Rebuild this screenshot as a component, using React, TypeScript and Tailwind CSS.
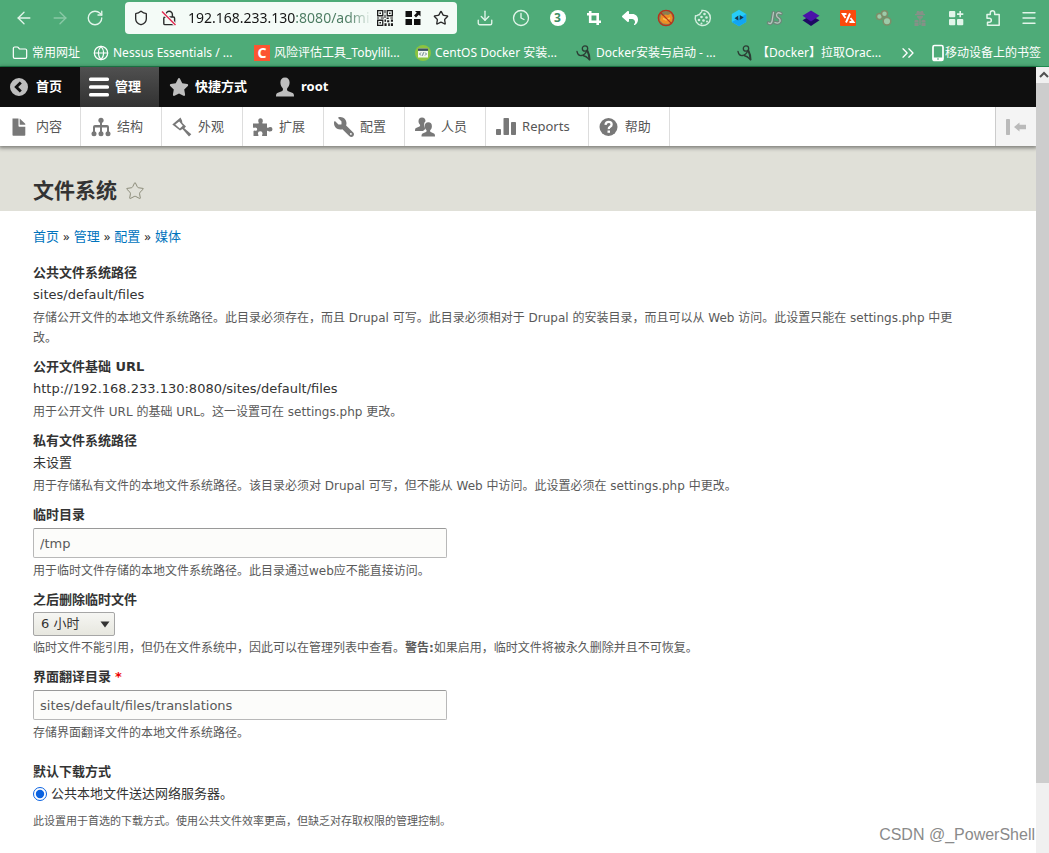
import type { ReactNode } from "react";
import {
  ArrowLeft,
  ArrowRight,
  ChevronsRight,
  Clock,
  Download,
  Globe,
  Menu,
  Folder,
  RotateCw,
  Shield,
  Star,
} from "lucide-react";
import { FaStar, FaWrench, FaReply } from "react-icons/fa6";

/* ---------- browser icons ---------- */

function InsecureLock() {
  return (
    <svg viewBox="0 0 16 16" className="size-4" fill="none" stroke="#2b2b2b" strokeWidth="1.4">
      <path d="M5 7V4.5a3.2 3.2 0 0 1 6.4 0V7" />
      <rect x="2.8" y="7" width="10.8" height="7.6" rx="1.2" />
      <path d="M1 1.5 14.5 15" stroke="#f4f9f6" strokeWidth="3.4" />
      <path d="M1 1.5 14.5 15" stroke="#e22850" strokeWidth="1.4" />
    </svg>
  );
}

function QrIcon() {
  return (
    <svg viewBox="0 0 15 15" className="size-4" fill="#1c1c1c">
      <path fillRule="evenodd" d="M0 0h6v6H0zM1.2 1.2v3.6h3.6V1.2zM9 0h6v6H9zM10.2 1.2v3.6h3.6V1.2zM0 9h6v6H0zM1.2 10.2v3.6h3.6v-3.6z" />
      <path d="M2.3 2.3h1.4v1.4H2.3zM11.3 2.3h1.4v1.4h-1.4zM2.3 11.3h1.4v1.4H2.3zM7 0h1v3H7zM7 4.5h1v3H7zM0 7h2v1H0zM3.5 7h3v1h-3zM9 7h2v1.5H9zM12.5 7H15v1h-2.5zM7 9h1.5v2H7zM9.5 9.5h2v2h-2zM13 9h2v2h-2zM7 12.5h2V15H7zM10.5 12.5h1.5V15h-1.5zM13 12.5h2V15h-2z" />
    </svg>
  );
}

function TilesIcon() {
  return (
    <svg viewBox="0 0 16 16" className="size-4" fill="#111">
      <rect x="0.5" y="1" width="6.5" height="6" />
      <rect x="0.5" y="9" width="6.5" height="6" />
      <rect x="9" y="9" width="6.5" height="6" />
      <path d="M10 1h5.5v5.5l-1.7-1.7L11 7.5 9 5.6l2.8-2.8z" />
    </svg>
  );
}

function CropIcon() {
  return (
    <svg viewBox="0 0 20 20" className="size-5" fill="none" stroke="#fff" strokeWidth="2.6">
      <path d="M6.2 3v10.7H17M3 6.3h10.700V17" />
    </svg>
  );
}

function BlockedIcon() {
  return (
    <svg viewBox="0 0 20 20" className="size-5">
      <circle cx="10" cy="10" r="8" fill="#8a7f52" />
      <path d="M5 6.500 7 8l2-1.500 3 .5 3-1.500 1.500 4-1 5-3.500 1.500-5-.5-3-3z" fill="#ee8f25" />
      <path d="m7 10.500 3 1.500 4-2" fill="none" stroke="#f9c24c" strokeWidth="1.400" />
      <circle cx="10" cy="10" r="7.700" fill="none" stroke="#b8321c" strokeWidth="1.300" />
      <path d="M4.6 4.6 15.4 15.4" stroke="#b8321c" strokeWidth="1.3" />
    </svg>
  );
}

function CookieIcon() {
  return (
    <svg viewBox="0 0 20 20" className="size-5" fill="none" stroke="#d3eedf" strokeWidth="1.400" strokeLinecap="round">
      <path d="M9 2.400q.2 2-1.500 2.600-.5 2-2.500 2-1 1-2.500.8A7.600 7.600 0 1 0 9 2.400z" />
      <g fill="#d3eedf" stroke="none">
        <circle cx="11.500" cy="6" r="1.300" />
        <circle cx="8.500" cy="9" r="1.300" />
        <circle cx="13.500" cy="9.500" r="1.300" />
        <circle cx="6" cy="12" r="1.300" />
        <circle cx="10.500" cy="12.500" r="1.300" />
        <circle cx="14" cy="13.500" r="1" />
        <circle cx="8.500" cy="15.500" r="1" />
      </g>
    </svg>
  );
}

function HexIcon() {
  return (
    <svg viewBox="0 0 20 20" className="size-5">
      <path d="M10 1.8 17.2 6v8L10 18.2 2.8 14V6z" fill="#27cdf8" />
      <path d="M17.2 6v8L10 18.2 2.8 14z" fill="#12a5f2" />
      <path d="M9.300 7.500v5L5.500 10.300zM10.700 7v5l4-2.500z" fill="#173a4d" />
    </svg>
  );
}

function JsIcon() {
  return (
    <svg viewBox="0 0 20 20" className="size-5" fill="none" strokeLinecap="round">
      <g stroke="#6c8578" strokeWidth="3.6">
        <path d="M8.500 4.500 7 13.500q-1 3-3.500 1.500" />
        <path d="M16 5.500q-4-2-4.500 1.500 0 2 2 3t1.500 3.500q-1.500 2.500-5 1" />
      </g>
      <g stroke="#b5c9be" strokeWidth="1.3">
        <path d="M8.500 4.500 7 13.500q-1 3-3.500 1.500" />
        <path d="M16 5.500q-4-2-4.500 1.500 0 2 2 3t1.500 3.500q-1.500 2.500-5 1" />
      </g>
    </svg>
  );
}

function LayersIcon() {
  return (
    <svg viewBox="0 0 20 20" className="size-5">
      <path d="m10 7.500 8.500 4.800L10 18l-8.500-5.700z" fill="#1d0a63" />
      <path d="m10 2.500 8.500 5.300L10 13.500 1.500 7.800z" fill="#4a12a8" />
    </svg>
  );
}

function OrangeCodeIcon() {
  return (
    <svg viewBox="0 0 20 20" className="size-5">
      <rect x="2" y="2" width="16" height="16" rx="1" fill="#fb4a0c" />
      <path d="M8.500 6H4.800L7.500 10M12 5.500 8 14.500M11.500 14h4L12.500 10" fill="none" stroke="#fff" strokeWidth="1.900" />
    </svg>
  );
}

function MoleculeIcon() {
  return (
    <svg viewBox="0 0 20 20" className="size-5" fill="#9ccba9" stroke="#7d8d68" strokeWidth="1.500">
      <circle cx="5.500" cy="8.500" r="3" />
      <circle cx="10.500" cy="5.800" r="3" />
      <circle cx="13" cy="13.300" r="3.800" />
    </svg>
  );
}

function AgentIcon() {
  return (
    <svg viewBox="0 0 20 20" className="size-5" fill="#859187">
      <path d="M7 3h2l1 1 1-1h2l.8 3H15v1.3H5V6h1.2z" />
      <path d="M7 8h6q0 3-3 3T7 8zM4.500 12.500q2-1.500 4 0v1.500h-4zM11.500 12.500q2-1.500 4 0v1.500h-4zM4.500 14.500h4V18h-4zM11.500 14.500h4V18h-4zM9.300 11h1.400v6H9.300z" />
    </svg>
  );
}

function AppsPlusIcon() {
  return (
    <svg viewBox="0 0 20 20" className="size-5" fill="#e2f5ea">
      <rect x="3" y="3" width="6.300" height="6.300" rx="1" />
      <rect x="3" y="11" width="6.300" height="6.300" rx="1" />
      <rect x="11" y="11" width="6.300" height="6.300" rx="1" />
      <path d="M13.400 3h1.600v2.300h2.300v1.600H15v2.400h-1.600V6.900H11V5.300h2.400z" />
    </svg>
  );
}

function AddonIcon() {
  return (
    <svg viewBox="0 0 20 20" className="size-5" fill="none" stroke="#e2f5ea" strokeWidth="1.500" strokeLinejoin="round">
      <path d="M7.300 6.500V5a2.200 2.200 0 0 1 4.400 0v1.500h4.500v10.700H4.500v-3h1.800a2 2 0 0 0 0-4H4V6.500z" />
    </svg>
  );
}

function PhoneIcon() {
  return (
    <svg viewBox="0 0 14 18" className="h-[18px] w-[14px]">
      <rect x="2" y="1.500" width="10" height="15" rx="1.500" fill="none" stroke="#fff" strokeWidth="1.700" />
      <path d="M2 13.500h10v3H2z" fill="#fff" />
      <path d="M6 15h2" stroke="#4eab78" />
    </svg>
  );
}

function CentosIcon() {
  return (
    <svg viewBox="0 0 16 16" className="size-4">
      <circle cx="8" cy="8" r="8" fill="#8cc43f" />
      <rect x="3" y="3.500" width="10" height="9" fill="#f4f8ee" />
      <rect x="3" y="3.500" width="10" height="2.400" fill="#3b5261" />
      <path d="m6 7.500-1.500 1.500L6 10.500M10 7.500 11.500 9 10 10.500M8.500 7.300l-1 3.400" fill="none" stroke="#41606f" strokeWidth="0.800" />
    </svg>
  );
}

function FigureIcon() {
  return (
    <svg viewBox="0 0 16 16" className="size-4 shrink-0" fill="none" stroke="#2c3d34" strokeWidth="1.300" strokeLinecap="round">
      <circle cx="9" cy="3.500" r="2.700" />
      <path d="M1 6.500q1 4.500 4.500 4t5.500-5" />
      <path d="M7 10.500q3 .5 6.500 4" />
      <path d="M11.500 6q2 4 2 8.500" strokeWidth="2" />
    </svg>
  );
}

function CsdnIcon() {
  return (
    <span className="flex size-4 items-center justify-center bg-[#fc5531] text-sm font-bold text-white">C</span>
  );
}

/* ---------- admin toolbar icons ---------- */

function Glyph({ children }: { children: ReactNode }) {
  return (
    <svg viewBox="0 0 20 20" className="size-5 shrink-0" fill="currentColor">
      {children}
    </svg>
  );
}

const HomeGlyph = () => (
  <Glyph>
    <path fillRule="evenodd" d="M9 1a9 9 0 1 0 0 18A9 9 0 0 0 9 1zm2.800 12.600-2 2L4.200 10l5.600-5.600 2 2L8.200 10z" />
  </Glyph>
);
const MenuGlyph = () => (
  <Glyph>
    <rect y="0.500" width="20" height="3.500" rx="1.500" />
    <rect y="8.200" width="20" height="3.500" rx="1.500" />
    <rect y="16" width="20" height="3.500" rx="1.500" />
  </Glyph>
);
const UserGlyph = () => (
  <Glyph>
    <path d="M10 0.500c3 0 4.600 2 4.600 5 0 2.500-1 4.500-2.200 5.600-.6.600-.5 2.400.3 2.900l5 2c1 .4 1.300 1.500 1.300 3.500H1c0-2 .3-3.100 1.300-3.500l5-2c.8-.5.9-2.300.3-2.900C6.400 10 5.400 8 5.400 5.500c0-3 1.600-5 4.600-5z" />
  </Glyph>
);
const FileGlyph = () => (
  <Glyph>
    <path d="M2.500 1.500h6V9q0 .8.800.8h6V18q0 .8-.8.800H3.300q-.8 0-.8-.8z" />
    <path d="M9.700 1.500v6.300H15q.8-.2.200-1z" />
  </Glyph>
);
const StructureGlyph = () => (
  <Glyph>
    <circle cx="10" cy="3.300" r="2.600" />
    <path d="M9 5h2v12H9zM2 10q0-2 2-2h12q2 0 2 2v6h-2v-5.500H4V16H2z" />
    <circle cx="3" cy="16.700" r="2.500" />
    <circle cx="10" cy="16.700" r="2.500" />
    <circle cx="17" cy="16.700" r="2.500" />
  </Glyph>
);
const BrushGlyph = () => (
  <Glyph>
    <path fillRule="evenodd" d="M8.500 0.500 10 3.500l.4 2.500 3.600 3.500-1.700 1.700 7 6-2.300 2.300-6.500-7.500-2.500 1.500L.3 7.500zM3.300 7.600l4.500 3.900 3-2.700L7.200 4.600z" />
  </Glyph>
);
const ExtendGlyph = () => (
  <Glyph>
    <path d="M0 6.500h5.500q.6-.7-.2-2Q5 1.200 7.500 1.200T9.800 4.500q-.8 1.300-.2 2H14v4q.7.600 2-.3 3.500-.7 3.500 2t-3.500 2.200q-1.300-1-2-.3V19H9.300q-.6-.7.200-2 .3-2.800-2.300-2.800T5 17q.8 1.300.2 2H.500v-5q.7-.7 1.700-.2 2 .2 2-1.500T2.200 10.500Q1 11.200 0 10.500z" />
  </Glyph>
);
const PeopleGlyph = () => (
  <Glyph>
    <path d="M7 .5c2.300 0 3.500 1.600 3.500 3.800-1.400 1-1.600 3-1 5.200l.8 2.500-2.300 2H0c0-2 .3-2.600 1-3l3.500-1.500c.8-.5.800-1.500.3-2C4 6.700 3.500 5.600 3.500 4.300 3.500 2 4.700.5 7 .5z" />
    <path d="M13.300 5.300c2.400 0 3.600 1.600 3.600 4 0 1.500-.6 2.900-1.500 3.800-.5.500-.5 1.500.3 2l3.300 1.400c.8.400 1 1.200 1 3H6.500c0-1.800.3-2.600 1-3l3.500-1.400c.8-.5.800-1.500.3-2-.9-.9-1.500-2.300-1.500-3.800 0-2.400 1.100-4 3.500-4z" />
  </Glyph>
);
const ReportsGlyph = () => (
  <Glyph>
    <rect y="12" width="5" height="6" rx="0.800" />
    <rect x="7.500" y="1" width="5.500" height="17" rx="0.800" />
    <rect x="15" y="5" width="5" height="13" rx="0.800" />
  </Glyph>
);
const HelpGlyph = () => (
  <Glyph>
    <circle cx="9.500" cy="10" r="9" />
    <path d="M6.500 7.800Q6.800 4.800 9.700 4.800t2.900 2.600q0 1.500-1.500 2.400t-1.300 2.400" fill="none" stroke="#fff" strokeWidth="2.300" />
    <rect x="8.500" y="13.500" width="2.500" height="2.300" fill="#fff" />
  </Glyph>
);

/* ---------- data ---------- */

const extensions = [
  { label: "下载", icon: <Download className="size-[18px]" strokeWidth={1.8} /> },
  { label: "历史", icon: <Clock className="size-[18px]" strokeWidth={1.8} /> },
  {
    label: "标签计数",
    icon: (
      <span className="flex size-4 items-center justify-center rounded-full bg-white text-xs font-bold text-[#3f8f63]">3</span>
    ),
  },
  { label: "截图", icon: <CropIcon /> },
  { label: "撤销", icon: <FaReply className="size-4 text-white" /> },
  { label: "代理", icon: <BlockedIcon /> },
  { label: "Cookie", icon: <CookieIcon /> },
  { label: "切换", icon: <HexIcon /> },
  { label: "JS", icon: <JsIcon /> },
  { label: "图层", icon: <LayersIcon /> },
  { label: "代码", icon: <OrangeCodeIcon /> },
  { label: "分析", icon: <MoleculeIcon /> },
  { label: "用户代理", icon: <AgentIcon /> },
  { label: "应用", icon: <AppsPlusIcon /> },
  { label: "扩展", icon: <AddonIcon /> },
  { label: "菜单", icon: <Menu className="size-[18px]" strokeWidth={1.8} /> },
];

const bookmarks = [
  { title: "Nessus Essentials / ...", icon: <Globe className="size-4 shrink-0" strokeWidth={1.8} /> },
  { title: "风险评估工具_Tobylili...", icon: <CsdnIcon /> },
  { title: "CentOS Docker 安装...", icon: <CentosIcon /> },
  { title: "Docker安装与启动 - ...", icon: <FigureIcon /> },
  { title: "【Docker】拉取Orac...", icon: <FigureIcon /> },
];

const adminMenu = [
  { title: "内容", icon: <FileGlyph /> },
  { title: "结构", icon: <StructureGlyph /> },
  { title: "外观", icon: <BrushGlyph /> },
  { title: "扩展", icon: <ExtendGlyph /> },
  { title: "配置", icon: <FaWrench className="size-5 shrink-0 -scale-x-100" /> },
  { title: "人员", icon: <PeopleGlyph /> },
  { title: "Reports", icon: <ReportsGlyph /> },
  { title: "帮助", icon: <HelpGlyph /> },
];

const crumbs = ["首页", "管理", "配置", "媒体"];

/* ---------- page parts ---------- */

function BrowserChrome() {
  return (
    <header className="border-b border-[#1f8a50] bg-[#4eab78] text-[#e2f5ea]">
      <div className="flex h-9 items-center pr-[10px]">
        <div className="flex w-[125px] shrink-0 items-center gap-4 pl-[14px]">
          <button aria-label="后退"><ArrowLeft className="size-5" strokeWidth={1.6} /></button>
          <button aria-label="前进" className="opacity-40"><ArrowRight className="size-5" strokeWidth={1.6} /></button>
          <button aria-label="刷新"><RotateCw className="size-[18px]" strokeWidth={1.8} /></button>
        </div>
        <div className="flex h-8 flex-1 items-center rounded-sm bg-[#f4fbf7] pr-2 pl-2 text-[#2b2b2b]">
          <Shield className="size-4 shrink-0" strokeWidth={2} />
          <span className="ml-3 shrink-0"><InsecureLock /></span>
          <input
            aria-label="地址"
            readOnly
            value="192.168.233.130:8080/admin/config"
            className="ml-[11px] w-0 flex-1 bg-[linear-gradient(to_right,#151515_107px,#4a7a60_107px,#4a7a60_160px,transparent_184px)] bg-clip-text text-sm text-transparent outline-none"
          />
          <div className="flex shrink-0 items-center gap-3">
            <button aria-label="二维码"><QrIcon /></button>
            <button aria-label="应用面板"><TilesIcon /></button>
            <button aria-label="收藏"><Star className="size-4" strokeWidth={2} /></button>
          </div>
        </div>
        <div className="ml-[18px] flex w-[564px] shrink-0 items-center justify-between">
          {extensions.map((e) => (
            <button key={e.label} aria-label={e.label} className="flex size-5 items-center justify-center">
              {e.icon}
            </button>
          ))}
        </div>
      </div>
      <nav className="flex h-[30px] items-center pt-[3px] pr-2 pl-3 text-xs whitespace-nowrap text-white">
        <a href="#" className="flex w-[81px] shrink-0 items-center gap-1">
          <Folder className="size-4" strokeWidth={1.8} />
          常用网址
        </a>
        {bookmarks.map((b) => (
          <a key={b.title} href="#" className="flex w-[161px] shrink-0 items-center gap-1">
            {b.icon}
            {b.title}
          </a>
        ))}
        <button aria-label="更多书签"><ChevronsRight className="size-5" strokeWidth={1.6} /></button>
        <a href="#" className="ml-auto flex items-center">
          <PhoneIcon />
          移动设备上的书签
        </a>
      </nav>
    </header>
  );
}

function TopTab({ title, icon, active }: { title: string; icon: ReactNode; active?: boolean }) {
  return (
    <a
      href="#"
      className={
        active
          ? "flex items-center gap-[6px] bg-linear-to-b from-[#505050] to-[#323232] pr-[18px] pl-[9px] text-white"
          : "flex items-center gap-[6px] pr-[18px] pl-[10px] text-[#bebebe]"
      }
    >
      {icon}
      <span className="text-white">{title}</span>
    </a>
  );
}

function AdminToolbar() {
  return (
    <div className="relative shadow-[0_1px_4px_1px_rgba(0,0,0,0.45)]">
      <nav className="flex h-10 bg-[#0f0f0f] font-bold">
        <TopTab title="首页" icon={<HomeGlyph />} />
        <TopTab title="管理" icon={<MenuGlyph />} active />
        <TopTab title="快捷方式" icon={<FaStar className="size-5 shrink-0" />} />
        <TopTab title="root" icon={<UserGlyph />} />
      </nav>
      <nav className="flex h-[39px] bg-white text-[#565656]">
        {adminMenu.map((m) => (
          <a key={m.title} href="#" className="flex items-center gap-[6px] border-r border-[#ddd] pr-[18px] pl-[10px]">
            <span className="text-[#787878]">{m.icon}</span>
            {m.title}
          </a>
        ))}
        <button aria-label="垂直方向" className="ml-auto flex w-[41px] items-center justify-center border-l border-[#ccc] bg-[#f4f4f4]">
          <svg viewBox="0 0 20 16" className="h-4 w-5" fill="#bababa">
            <rect x="0" y="0" width="4" height="16" rx="0.800" />
            <path d="M8 8l5.500-4.500v2.300H20v4.400h-6.500v2.300z" />
          </svg>
        </button>
      </nav>
    </div>
  );
}

function FormItem({ label, id, required, children, help }: {
  label: string;
  id?: string;
  required?: boolean;
  children: ReactNode;
  help: ReactNode;
}) {
  return (
    <div>
      <label htmlFor={id} className="block leading-5 font-bold">
        {label}
        {required && <span className="ml-1 text-[#e00]">*</span>}
      </label>
      {children}
      <p className="text-xs leading-5 text-[#595959]">{help}</p>
    </div>
  );
}

function TextField({ id, value }: { id: string; value: string }) {
  return (
    <input
      id={id}
      defaultValue={value}
      className="my-[3px] block h-[30px] w-full max-w-[414px] rounded-xs border border-[#b8b8b8] border-t-[#999] bg-[#fcfcfa] px-[6px] text-[#595959]"
    />
  );
}

function StaticValue({ children }: { children: ReactNode }) {
  return <div className="mb-px leading-6">{children}</div>;
}

function SettingsForm() {
  return (
    <form className="flex flex-col gap-[9px] font-['DejaVu_Sans','Noto_Sans_CJK_SC',sans-serif]">
      <FormItem
        label="公共文件系统路径"
        help="存储公开文件的本地文件系统路径。此目录必须存在，而且 Drupal 可写。此目录必须相对于 Drupal 的安装目录，而且可以从 Web 访问。此设置只能在 settings.php 中更改。"
      >
        <StaticValue>sites/default/files</StaticValue>
      </FormItem>
      <FormItem label="公开文件基础 URL" help="用于公开文件 URL 的基础 URL。这一设置可在 settings.php 更改。">
        <StaticValue>http://192.168.233.130:8080/sites/default/files</StaticValue>
      </FormItem>
      <FormItem
        label="私有文件系统路径"
        help="用于存储私有文件的本地文件系统路径。该目录必须对 Drupal 可写，但不能从 Web 中访问。此设置必须在 settings.php 中更改。"
      >
        <StaticValue>未设置</StaticValue>
      </FormItem>
      <FormItem label="临时目录" id="tmp" help="用于临时文件存储的本地文件系统路径。此目录通过web应不能直接访问。">
        <TextField id="tmp" value="/tmp" />
      </FormItem>
      <FormItem
        label="之后删除临时文件"
        id="age"
        help={
          <>
            临时文件不能引用，但仍在文件系统中，因此可以在管理列表中查看。
            <strong>警告:</strong>如果启用，临时文件将被永久删除并且不可恢复。
          </>
        }
      >
        <div className="relative my-[2px] w-[82px]">
          <select
            id="age"
            className="block h-6 w-full appearance-none rounded-xs border border-[#a6a6a6] bg-linear-to-b from-[#f6f6f3] to-[#e7e7df] pl-[7px] text-[#333]"
          >
            <option>6 小时</option>
          </select>
          <svg viewBox="0 0 10 7" className="pointer-events-none absolute top-[9px] right-[5px] h-[7px] w-[10px]" fill="#333">
            <path d="M0.500 0.500h9L5 6.500z" />
          </svg>
        </div>
      </FormItem>
      <FormItem label="界面翻译目录" id="translations" required help="存储界面翻译文件的本地文件系统路径。">
        <TextField id="translations" value="sites/default/files/translations" />
      </FormItem>
      <fieldset className="mt-[10px]">
        <legend className="leading-5 font-bold">默认下载方式</legend>
        <label className="flex items-center gap-1 leading-6">
          <input type="radio" name="scheme" defaultChecked className="size-[14px] accent-[#0a62e0]" />
          公共本地文件送达网络服务器。
        </label>
        <p className="mt-[6px] text-[11px] leading-5 text-[#595959]">
          此设置用于首选的下载方式。使用公共文件效率更高，但缺乏对存取权限的管理控制。
        </p>
      </fieldset>
    </form>
  );
}

function Scrollbar() {
  return (
    <div className="relative z-10 flex w-[13px] shrink-0 flex-col bg-[#f0f0f0]">
      <svg viewBox="0 0 13 16" className="h-4" fill="none" stroke="#505050" strokeWidth="2">
        <path d="m4 10 4-4 4 4" />
      </svg>
      <div className="flex-10 bg-[#cdcdcd]" />
      <div className="flex-1" />
    </div>
  );
}

export default function App() {
  return (
    <div className="flex min-h-screen flex-col bg-white font-['Noto_Sans','Noto_Sans_CJK_SC',sans-serif] text-[13px] text-[#333]">
      <BrowserChrome />
      <div className="relative flex flex-1">
        <div className="min-w-0 flex-1">
          <AdminToolbar />
          <div className="flex h-[65px] items-center gap-2 bg-[#e0e0d8] pt-6 pl-[33px]">
            <h1 className="text-[21px] font-bold">文件系统</h1>
            <button aria-label="添加到快捷方式">
              <Star className="size-5 text-[#8c8c7a]" strokeWidth={1.2} />
            </button>
          </div>
          <main className="pt-[15px] pr-20 pl-[33px]">
            <nav className="mb-[17px] flex gap-1 leading-5">
              {crumbs.map((c, i) => (
                <span key={c} className="flex gap-1">
                  {i > 0 && <span>»</span>}
                  <a href="#" className="text-[#0074bd]">{c}</a>
                </span>
              ))}
            </nav>
            <SettingsForm />
          </main>
        </div>
        <Scrollbar />
        <div className="absolute right-[14px] bottom-[6px] font-['Liberation_Sans',sans-serif] text-base text-[#8a8a8a]">
          CSDN @_PowerShell
        </div>
      </div>
    </div>
  );
}
